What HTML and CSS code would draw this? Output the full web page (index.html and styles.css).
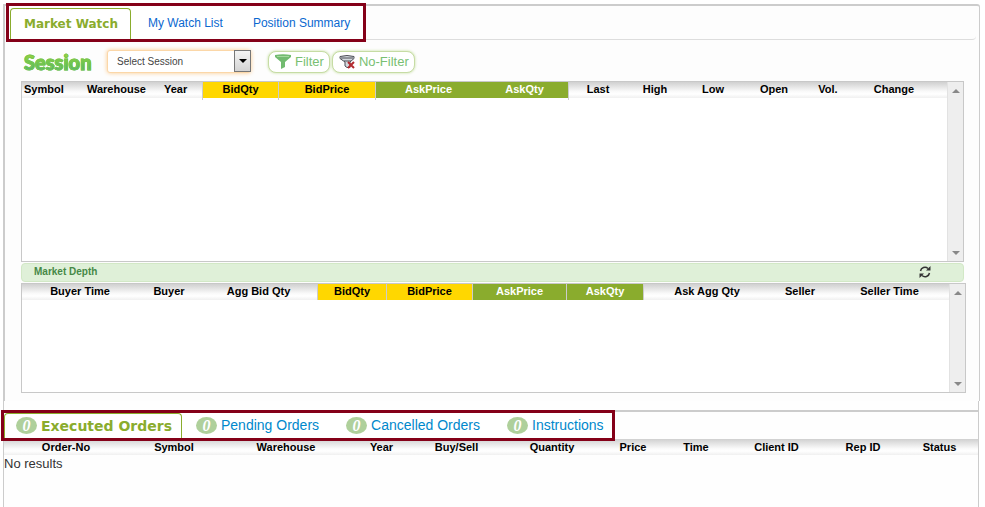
FILE: index.html
```html
<!DOCTYPE html>
<html lang="en">
<head>
<meta charset="utf-8">
<title>Market Watch</title>
<link rel="stylesheet" href="styles.css">
</head>
<body>
<main class="panel">
  <div class="tabs">
    <nav class="frame market-tabs">
      <a class="tab active" href="#watch">Market Watch</a>
      <a class="tab" href="#mylist">My Watch List</a>
      <a class="tab" href="#summary">Position Summary</a>
    </nav>
    <div class="rule"></div>
  </div>

  <div class="toolbar">
    <label class="session" for="session">Session</label>
    <div class="picker">
      <select id="session"><option>Select Session</option></select>
      <span class="drop"><svg width="8" height="4" viewBox="0 0 8 4"><path d="M0 0h8L4 4z"/></svg></span>
    </div>
    <div class="filters">
      <button type="button" class="pill"><svg width="16" height="15" viewBox="0 0 16 15"><path fill="#72bb70" d="M0 1q8-1.500 16 0v2l-6 5v5l-4 2V8L0 3z"/><path stroke="#a4d89c" d="M2 2.500h12"/></svg>Filter</button>
      <button type="button" class="pill"><svg width="16" height="15" viewBox="0 0 16 15" fill="none"><path fill="#d5d9df" stroke="#4b4c55" d="M1 2.500q7-2 14 0v2L11 8v5.500H8L6 12V8L1 4.500z"/><path stroke="#4b4c55" d="M2 4h12M5 7h7"/><path stroke="#b32b30" stroke-width="2" d="M9 8l6 6M15 8l-6 6"/></svg>No-Filter</button>
    </div>
  </div>

  <section class="grid watch">
    <table>
      <thead><tr><th>Symbol</th><th>Warehouse</th><th>Year</th><th class="bid">BidQty</th><th class="bid">BidPrice</th><th class="ask">AskPrice</th><th class="ask joined">AskQty</th><th class="edge">Last</th><th>High</th><th>Low</th><th>Open</th><th>Vol.</th><th>Change</th></tr></thead>
    </table>
    <div class="scroll"><i class="up"></i><i class="down"></i></div>
  </section>

  <div class="depth-bar">
    <h2>Market Depth</h2>
    <button type="button" class="refresh" aria-label="Refresh"><svg width="12" height="12" viewBox="0 0 12 12" fill="none" stroke="#333" stroke-width="1.500"><path d="M1.500 5A4.500 4.500 0 0 1 9 2.500M10.500 7A4.500 4.500 0 0 1 3 9.500"/><path fill="#333" stroke="none" d="M11.500 0v4.500H7zM.5 12V7.500H5z"/></svg></button>
  </div>

  <section class="grid depth">
    <table>
      <thead><tr><th>Buyer Time</th><th>Buyer</th><th>Agg Bid Qty</th><th class="bid">BidQty</th><th class="bid">BidPrice</th><th class="ask">AskPrice</th><th class="ask">AskQty</th><th class="edge">Ask Agg Qty</th><th>Seller</th><th>Seller Time</th></tr></thead>
    </table>
    <div class="scroll"><i class="up"></i><i class="down"></i></div>
  </section>
</main>

<section class="orders">
  <div class="orders-top">
    <nav class="frame order-tabs">
      <a class="tab active" href="#executed"><span class="badge">0</span>Executed Orders</a>
      <a class="tab" href="#pending"><span class="badge">0</span>Pending Orders</a>
      <a class="tab" href="#cancelled"><span class="badge">0</span>Cancelled Orders</a>
      <a class="tab" href="#instructions"><span class="badge">0</span>Instructions</a>
    </nav>
  </div>
  <table class="orders-table">
    <thead><tr><th>Order-No</th><th>Symbol</th><th>Warehouse</th><th>Year</th><th>Buy/Sell</th><th>Quantity</th><th>Price</th><th>Time</th><th>Client ID</th><th>Rep ID</th><th>Status</th></tr></thead>
    <tbody><tr><td colspan="11">No results</td></tr></tbody>
  </table>
</section>
</body>
</html>
```
FILE: styles.css
```css
* { box-sizing: border-box; }

body {
  margin: 0;
  padding: 4px 5px 0 3px;
  min-height: 100vh;
  display: flex;
  flex-direction: column;
  background: #fff;
  font-family: "Liberation Sans", Arial, sans-serif;
  color: #000;
}

a { text-decoration: none; }
button { font-family: inherit; margin: 0; cursor: pointer; }

.panel {
  border-top: 2px solid #ccc;
  border-left: 2px solid #ccc;
  border-right: 1px solid #ccc;
  border-top-right-radius: 3px;
  background: #fdfdfd;
  padding-bottom: 8px;
}

/* Tabs */
.tabs { display: flex; align-items: flex-start; }

.frame {
  display: flex;
  border: 3px solid #840018;
  background: #fff;
}

.market-tabs {
  margin: -3px 0 0 1px;
  height: 39px;
  padding: 2px 0 0 1px;
}

.rule {
  flex: 1;
  height: 34px;
  margin-right: 3px;
  border-bottom: 1px solid #ddd;
  border-bottom-right-radius: 4px;
}

.tab {
  display: flex;
  align-items: center;
  white-space: nowrap;
}

.market-tabs .tab {
  font-size: 12px;
  color: #0a68d0;
  padding: 0 15px 2px;
}

.market-tabs .tab:last-child { padding-right: 13px; }

.tab.active {
  color: #8aac2d;
  font-family: "DejaVu Sans", Verdana, sans-serif;
  font-weight: bold;
  border: 1px solid #8aac2d;
  border-bottom: 0;
  border-radius: 4px 4px 0 0;
}

.market-tabs .tab.active { padding: 0 12px 1px 13px; margin-right: 2px; }

/* Toolbar */
.toolbar {
  display: flex;
  align-items: center;
  height: 39px;
  padding-left: 19px;
}

.session {
  width: 83px;
  font: 900 20px/24px Lato, sans-serif;
  color: #6fc04e;
  background: linear-gradient(#9ed23c 20%, #6cc552 55%, #4aab87);
  -webkit-background-clip: text;
  background-clip: text;
  -webkit-text-fill-color: transparent;
  -webkit-text-stroke: 1px #78c64c;
}

.picker {
  position: relative;
  width: 144px;
  height: 23px;
}

.picker select {
  appearance: none;
  width: 100%;
  height: 100%;
  margin: 0;
  border: 1px solid #fbd7a8;
  border-radius: 3px;
  box-shadow: 0 0 4px #fbc98a;
  background: #fff;
  color: #444;
  font: 10px "Liberation Sans", sans-serif;
  padding: 0 20px 0 9px;
}

.drop {
  position: absolute;
  top: 0;
  right: 0;
  width: 17px;
  height: 22px;
  display: flex;
  align-items: center;
  justify-content: center;
  border: 1px solid #777;
  background: linear-gradient(#f4f4f4, #d4d4d4);
  pointer-events: none;
}

.filters { display: flex; gap: 2px; margin-left: 17px; }

.pill {
  display: flex;
  align-items: center;
  gap: 4px;
  height: 22px;
  padding: 0 5px 0 6px;
  border: 1px solid #c6dca4;
  border-radius: 8px;
  box-shadow: 0 0 3px #c3dd9c;
  background: #fff;
  color: #79bf73;
  font-size: 13px;
}

/* Grids */
.grid {
  display: flex;
  align-items: flex-start;
  border: 1px solid #c8c8c8;
  background: #fff;
}

.watch { margin: 0 15px 1px 16px; height: 181px; }
.depth { margin: 0 13px 0 16px; height: 110px; }

table {
  flex: 1;
  width: 100%;
  table-layout: fixed;
  border-collapse: separate;
  border-spacing: 0;
}

th {
  height: 16px;
  padding: 0;
  font-size: 11px;
  line-height: 14px;
  vertical-align: top;
  white-space: nowrap;
  background: linear-gradient(#d0d0d0, #fafafa 60%, #fff 75%, #f0f0f0) no-repeat top / 100% 16px;
}

.bid { background: linear-gradient(#ffd700, #ffd700) no-repeat top / 100% 16px; }
.ask { background: linear-gradient(#8aac2d, #8aac2d) no-repeat top / 100% 16px; color: #fff; }
.bid, .ask, .edge { border-left: 1px solid #ccc; }
.joined { border-left: 0; }

.watch th { height: 18px; }
.watch th:nth-child(-n+3) { text-align: left; padding-left: 2px; }
.watch th:nth-child(1) { width: 63px; }
.watch th:nth-child(2) { width: 77px; }
.watch th:nth-child(3) { width: 40px; }
.watch th:nth-child(4) { width: 76px; }
.watch th:nth-child(5) { width: 97px; }
.watch th:nth-child(6) { width: 106px; }
.watch th:nth-child(7) { width: 87px; }
.watch th:nth-child(8) { width: 59px; }
.watch th:nth-child(9) { width: 56px; }
.watch th:nth-child(10) { width: 60px; }
.watch th:nth-child(11) { width: 62px; }
.watch th:nth-child(12) { width: 46px; }
.watch th:nth-child(13) { width: 96px; padding-right: 10px; }

.depth th:nth-child(1) { width: 116px; }
.depth th:nth-child(2) { width: 62px; }
.depth th:nth-child(3) { width: 117px; }
.depth th:nth-child(4) { width: 69px; }
.depth th:nth-child(5) { width: 86px; }
.depth th:nth-child(6) { width: 94px; }
.depth th:nth-child(7) { width: 77px; }
.depth th:nth-child(8) { width: 127px; }
.depth th:nth-child(9) { width: 60px; }
.depth th:nth-child(10) { width: 119px; }

.scroll {
  align-self: stretch;
  width: 16px;
  display: flex;
  flex-direction: column;
  justify-content: space-between;
  align-items: center;
  padding: 7px 0 6px;
  background: #eee;
  border-left: 1px solid #e2e2e2;
}

.scroll i { border: 4px solid transparent; }
.scroll .up { border-top-width: 0; border-bottom-color: #888; }
.scroll .down { border-bottom-width: 0; border-top-color: #888; }

.depth-bar {
  display: flex;
  justify-content: space-between;
  align-items: center;
  height: 19px;
  margin: 0 15px 1px 16px;
  padding: 0 32px 2px 12px;
  border: 1px solid #d2e8c6;
  border-radius: 4px;
  background: #dff0d8;
}

.depth-bar h2 {
  margin: 0;
  font-size: 10px;
  line-height: 14px;
  color: #468847;
}

.refresh {
  display: flex;
  padding: 0;
  border: 0;
  background: none;
}

/* Orders */
.orders {
  flex: 1;
  margin-right: 1px;
  padding-top: 9px;
  border-left: 1px solid #ccc;
  border-right: 1px solid #ccc;
  background: #fefefe;
}

.orders-top {
  position: relative;
  display: flex;
  height: 29px;
  border-top: 2px solid #ccc;
}

.order-tabs {
  height: 31px;
  margin: -2px 0 0 -3px;
  padding-right: 8px;
}

.order-tabs .tab {
  gap: 4px;
  padding: 0 13px 1px 14px;
  font-size: 14px;
  color: #08c;
}

.order-tabs .tab:last-child { padding-right: 0; }
.order-tabs .tab.active { padding: 0 9px 1px 11px; color: #8aac2d; }

.badge {
  width: 21px;
  height: 17px;
  border-radius: 50%;
  background: #afd09b;
  color: #fff;
  font: italic bold 16px/17px "Liberation Serif", serif;
  text-align: center;
}

.orders-table th:nth-child(1) { width: 124px; }
.orders-table th:nth-child(2) { width: 92px; }
.orders-table th:nth-child(3) { width: 132px; }
.orders-table th:nth-child(4) { width: 59px; }
.orders-table th:nth-child(5) { width: 91px; }
.orders-table th:nth-child(6) { width: 100px; }
.orders-table th:nth-child(7) { width: 62px; }
.orders-table th:nth-child(8) { width: 64px; }
.orders-table th:nth-child(9) { width: 97px; }
.orders-table th:nth-child(10) { width: 76px; }
.orders-table th:nth-child(11) { width: 77px; }
.orders-table th { line-height: 16px; }

td {
  padding: 0;
  font-size: 13px;
  line-height: 18px;
  color: #333;
}
```
